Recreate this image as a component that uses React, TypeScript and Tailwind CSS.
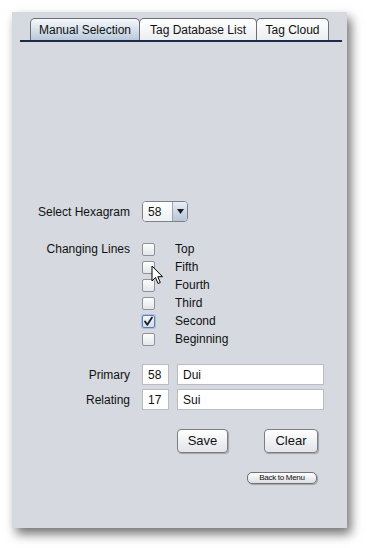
import React from "react";

const font = { fontFamily: '"Liberation Sans", Arial, sans-serif' };

function Checkbox({ checked }: { checked?: boolean }) {
  return (
    <div
      className={
        "w-[13px] h-[13px] rounded-[2px] border flex items-center justify-center " +
        (checked
          ? "border-[#5f7fb0] bg-gradient-to-b from-[#f4f7fb] to-[#d3dce8] shadow-[0_0_0_1px_#a9bedb]"
          : "border-[#8d9299] bg-gradient-to-b from-[#fdfdfd] to-[#e4e6ea]")
      }
    >
      {checked && (
        <svg width="11" height="11" viewBox="0 0 11 11">
          <path d="M2 5.5 L4.3 8.8 L9 1.5" stroke="#1b1e24" strokeWidth="1.8" fill="none" strokeLinecap="round" strokeLinejoin="round" />
        </svg>
      )}
    </div>
  );
}

function Tab({ label, w, active }: { label: string; w: string; active?: boolean }) {
  return (
    <div
      className={
        w +
        " h-[22px] flex items-center justify-center rounded-t-[5px] border border-b-0 border-[#6b6f76] text-[12px] text-[#111] -ml-px first:ml-0 " +
        (active
          ? "bg-gradient-to-b from-[#f6f9fc] to-[#b9c9da]"
          : "bg-gradient-to-b from-[#ffffff] to-[#eceef1]")
      }
    >
      {label}
    </div>
  );
}

export default function App() {
  const lines = [
    { l: "Top" },
    { l: "Fifth" },
    { l: "Fourth" },
    { l: "Third" },
    { l: "Second", c: true },
    { l: "Beginning" },
  ];
  return (
    <div className="w-[367px] h-[548px] bg-white overflow-hidden pt-[12px] pl-[12px]" style={font}>
      <div className="relative w-[335px] h-[516px] bg-[#d6d9e0] shadow-[4px_6px_10px_rgba(0,0,0,0.55)] text-[12px] text-[#111]">
        {/* tabs */}
        <div className="ml-[8px] w-[322px] pt-[6px] border-b-2 border-[#1d2a48] flex pl-[10px]">
          <Tab label="Manual Selection" w="w-[110px]" active />
          <Tab label="Tag Database List" w="w-[118px]" />
          <Tab label="Tag Cloud" w="w-[73px]" />
        </div>

        {/* select hexagram */}
        <div className="mt-[159px] flex items-center h-[21px]">
          <div className="w-[118px] text-right">Select Hexagram</div>
          <div className="ml-[12px] w-[46px] h-[21px] rounded-[4px] border border-[#7c8088] flex overflow-hidden bg-white">
            <div className="flex-1 flex items-center pl-[5px] bg-gradient-to-b from-[#ffffff] to-[#eef0f3]">58</div>
            <div className="w-[15px] border-l border-[#9aa3b0] bg-gradient-to-b from-[#e8eef5] to-[#b6c5d6] flex items-center justify-center">
              <svg width="7" height="5" viewBox="0 0 7 5"><path d="M0 0 H7 L3.5 5 Z" fill="#1a1d22" /></svg>
            </div>
          </div>
        </div>

        {/* changing lines */}
        <div className="mt-[18px] flex">
          <div className="w-[118px] text-right h-[18px] leading-[18px]">Changing Lines</div>
          <div className="ml-[12px] flex flex-col">
            {lines.map((x) => (
              <div key={x.l} className="h-[18px] flex items-center">
                <Checkbox checked={x.c} />
                <span className="ml-[20px]">{x.l}</span>
              </div>
            ))}
          </div>
        </div>

        {/* primary / relating */}
        <div className="mt-[16px] flex flex-col gap-[4px]">
          {[
            ["Primary", "58", "Dui"],
            ["Relating", "17", "Sui"],
          ].map(([a, b, c]) => (
            <div key={a} className="flex items-center h-[21px]">
              <div className="w-[118px] text-right">{a}</div>
              <div className="ml-[12px] w-[27px] h-[21px] bg-white border border-[#b9bcc2] flex items-center pl-[5px]">{b}</div>
              <div className="ml-[8px] w-[147px] h-[21px] bg-white border border-[#b9bcc2] flex items-center pl-[5px]">{c}</div>
            </div>
          ))}
        </div>

        {/* buttons */}
        <div className="mt-[19px] flex pl-[165px]">
          <button className="w-[51px] h-[24px] rounded-[4px] border border-[#7a7d83] bg-gradient-to-b from-[#ffffff] to-[#e2e4e8] shadow-[1px_1px_1px_rgba(0,0,0,0.25)] text-[13px]">Save</button>
          <button className="ml-[36px] w-[54px] h-[24px] rounded-[4px] border border-[#7a7d83] bg-gradient-to-b from-[#ffffff] to-[#e2e4e8] shadow-[1px_1px_1px_rgba(0,0,0,0.25)] text-[13px]">Clear</button>
        </div>
        <div className="mt-[19px] flex pl-[235px]">
          <button className="w-[70px] h-[12px] rounded-[5px] border border-[#6f7278] bg-gradient-to-b from-[#ffffff] to-[#dcdee2] shadow-[1px_1px_1px_rgba(0,0,0,0.25)] text-[8px] leading-[10px] tracking-[-0.3px]">Back to Menu</button>
        </div>

        {/* mouse cursor */}
        <svg className="absolute left-[139px] top-[253px]" width="13" height="20" viewBox="0 0 13 20">
          <path d="M1 1 L1 16 L4.5 12.5 L7 18.5 L9.3 17.5 L6.8 11.7 L11.5 11.7 Z" fill="#fff" stroke="#000" strokeWidth="1" strokeLinejoin="round" />
        </svg>
      </div>
    </div>
  );
}
